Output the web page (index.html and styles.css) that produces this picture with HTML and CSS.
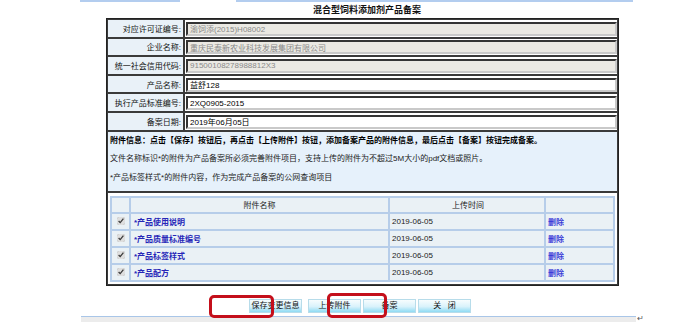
FILE: index.html
```html
<!DOCTYPE html>
<html lang="zh-CN">
<head>
    <meta charset="UTF-8">
    <title>混合型饲料添加剂产品备案</title>
    <link rel="stylesheet" href="styles.css">
</head>
<body>
    <div class="page">
        <div class="topline">
            <span class="seg seg-a"></span>
            <span class="seg seg-b"></span>
        </div>
        <h1 class="title">混合型饲料添加剂产品备案</h1>

        <table class="form" cellspacing="0">
            <tr>
                <td class="label">对应许可证编号:</td>
                <td class="field"><input class="txt" type="text" value="渝饲添(2015)H08002" disabled></td>
            </tr>
            <tr>
                <td class="label">企业名称:</td>
                <td class="field"><input class="txt" type="text" value="重庆民泰新农业科技发展集团有限公司" disabled></td>
            </tr>
            <tr>
                <td class="label">统一社会信用代码:</td>
                <td class="field"><input class="txt" type="text" value="91500108278988812X3" disabled></td>
            </tr>
            <tr>
                <td class="label">产品名称:</td>
                <td class="field"><input class="txt" type="text" value="益舒128"></td>
            </tr>
            <tr>
                <td class="label">执行产品标准编号:</td>
                <td class="field"><input class="txt" type="text" value="2XQ0905-2015"></td>
            </tr>
            <tr>
                <td class="label">备案日期:</td>
                <td class="field"><input class="txt" type="text" value="2019年06月05日"></td>
            </tr>
            <tr>
                <td class="info" colspan="2">
                    <p class="strong">附件信息：点击【保存】按钮后，再点击【上传附件】按钮，添加备案产品的附件信息，最后点击【备案】按钮完成备案。</p>
                    <p>文件名称标识*的附件为产品备案所必须完善附件项目，支持上传的附件为不超过5M大小的pdf文档或照片。</p>
                    <p>*产品标签样式*的附件内容，作为完成产品备案的公网查询项目</p>
                </td>
            </tr>
            <tr>
                <td class="files" colspan="2">
                    <table class="attach" cellspacing="0">
                        <tr class="head">
                            <td class="chk"></td>
                            <td class="name">附件名称</td>
                            <td class="time">上传时间</td>
                            <td class="op"></td>
                        </tr>
                        <tr>
                            <td class="chk"><input type="checkbox" checked></td>
                            <td class="name"><span class="link">*产品使用说明</span></td>
                            <td class="time">2019-06-05</td>
                            <td class="op"><span class="del">删除</span></td>
                        </tr>
                        <tr>
                            <td class="chk"><input type="checkbox" checked></td>
                            <td class="name"><span class="link">*产品质量标准编号</span></td>
                            <td class="time">2019-06-05</td>
                            <td class="op"><span class="del">删除</span></td>
                        </tr>
                        <tr>
                            <td class="chk"><input type="checkbox" checked></td>
                            <td class="name"><span class="link">*产品标签样式</span></td>
                            <td class="time">2019-06-05</td>
                            <td class="op"><span class="del">删除</span></td>
                        </tr>
                        <tr>
                            <td class="chk"><input type="checkbox" checked></td>
                            <td class="name"><span class="link">*产品配方</span></td>
                            <td class="time">2019-06-05</td>
                            <td class="op"><span class="del">删除</span></td>
                        </tr>
                    </table>
                </td>
            </tr>
        </table>

        <div class="actions">
            <button class="btn btn-save">保存变更信息</button>
            <button class="btn">上传附件</button>
            <button class="btn">备案</button>
            <button class="btn">关&nbsp;&nbsp;&nbsp;闭</button>
            <span class="mark mark-a"></span>
            <span class="mark mark-b"></span>
        </div>

        <div class="bottomline">
            <span class="rule"></span>
            <span class="para">↵</span>
        </div>
    </div>
</body>
</html>
```

FILE: styles.css
```css
/* Page */
* {
    box-sizing: border-box;
    margin: 0;
    padding: 0;
}

body {
    background: #fff;
    color: #000;
    font-family: "Liberation Sans", "Noto Sans CJK SC", sans-serif;
    font-size: 8px;
}

.page {
    width: 694px;
    height: 326px;
    position: relative;
    overflow: hidden;
}

/* top ruler lines */
.topline {
    display: flex;
    height: 2px;
    padding-left: 80px;
}

.seg {
    height: 2px;
    background: #b3cdef;
}

.seg-a { width: 100px; }
.seg-b { width: 397px; margin-left: 56px; }

.title {
    font-size: 9px;
    font-weight: bold;
    line-height: 12px;
    height: 16px;
    padding-top: 2px;
    margin-left: 313px;
    color: #111;
}

/* main form table */
.form {
    margin-left: 106px;
    width: 513px;
    border: 1px solid #222;
    border-collapse: separate;
}

.form td {
    border: 1px solid #3a3a3a;
    vertical-align: middle;
}

.form .label {
    width: 77px;
    height: 18.6px;
    text-align: right;
    padding-right: 2px;
    background: #e9f1f8;
    color: #111;
    white-space: nowrap;
    font-size: 8px;
}

.form .field {
    padding: 1px 0 0 1px;
    background: #fff;
}

.txt {
    display: block;
    width: 100%;
    height: 14px;
    border: 2px inset #c9c9c9;
    border-top-color: #888;
    border-left-color: #888;
    font: 8px "Liberation Sans", "Noto Sans CJK SC", sans-serif;
    color: #000;
    background: #fff;
    padding: 0 2px;
}

.txt:disabled {
    background: #ebe9e3;
    color: #8a8a8a;
}

/* info block */
.form .info {
    height: 61px;
    background: #e6f1fb;
    padding: 0 2px;
    vertical-align: top;
}

.info p {
    line-height: 19.5px;
    color: #222;
    white-space: nowrap;
}

.info p.strong {
    font-weight: bold;
    color: #000;
    line-height: 17px;
}

/* attachments */
.form .files {
    padding: 3px 2px 2px 2px;
    background: #fff;
}

.attach {
    width: 100%;
    border: 1px solid #b6cde9;
    background: #eaf1f5;
}

.attach td {
    border: 1px solid #b6cde9;
    height: 17px;
    color: #222;
}

.attach .head td {
    height: 16px;
    text-align: center;
}

.attach .chk {
    width: 19px;
    text-align: center;
}

.attach .chk input {
    width: 8px;
    height: 8px;
    margin: 0;
    vertical-align: middle;
    accent-color: #dedede;
}

.attach .name {
    width: 259px;
    padding-left: 3px;
}

.attach .head .name {
    padding-left: 0;
}

.attach .time {
    width: 156px;
    padding-left: 2px;
}

.attach .op {
    padding-left: 2px;
}

.link {
    color: #2626b8;
    font-weight: bold;
}

.del {
    color: #3a3ad8;
    font-weight: bold;
}

/* buttons */
.actions {
    display: flex;
    gap: 2px;
    margin-left: 249px;
    margin-top: 13px;
    position: relative;
}

.btn {
    width: 53px;
    height: 14px;
    border: 1px solid #b7dcea;
    background: linear-gradient(#f7fcfe, #d9f2fb 55%, #8fdbf3);
    font: 8px "Liberation Sans", "Noto Sans CJK SC", sans-serif;
    color: #111;
    line-height: 12px;
}

.btn-save {
    margin-right: 4px;
}

.mark {
    position: absolute;
    border: 3px solid #c40f1b;
    border-radius: 5px;
}

.mark-a {
    left: -40px;
    top: -4px;
    width: 65px;
    height: 23px;
}

.mark-b {
    left: 78px;
    top: -6px;
    width: 60px;
    height: 25px;
}

/* bottom ruler */
.bottomline {
    display: flex;
    align-items: flex-start;
    margin-top: 3px;
    padding-left: 81px;
}

.rule {
    width: 555px;
    height: 6px;
    border-top: 1px solid #a9c6e8;
    background: #ececec;
}

.para {
    font-size: 8px;
    line-height: 6px;
    color: #555;
    margin-left: 1px;
}
```
